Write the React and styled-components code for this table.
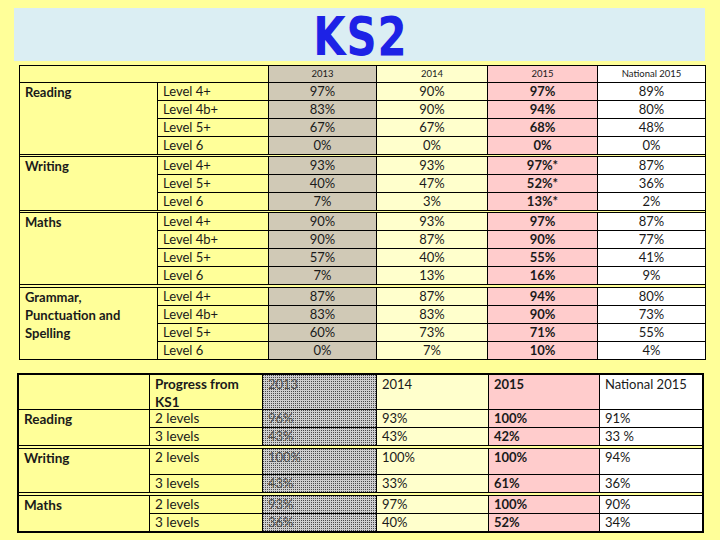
import React from "react";
import styled, { createGlobalStyle, css } from "styled-components";

const Global = createGlobalStyle`
  html, body { margin: 0; padding: 0; background: #ffff99; }
  body { font-family: Lato, "Open Sans", sans-serif; color: #1a1a1a; }
`;

const Page = styled.div`
  width: 720px;
  height: 540px;
  overflow: hidden;
  background: #ffff99;
  display: flex;
  flex-direction: column;
  align-items: flex-start;
  padding-top: 8px;
  box-sizing: border-box;
`;

const Banner = styled.div`
  margin-left: 14px;
  width: 691px;
  height: 53px;
  background: #dbeef3;
  display: flex;
  justify-content: center;
  align-items: center;
`;

const Title = styled.h1`
  margin: 0;
  font-family: "DejaVu Sans", sans-serif;
  font-weight: bold;
  font-size: 53px;
  line-height: 53px;
  color: #1d22e6;
  transform: scaleX(0.79) translate(1px, 2px);
  letter-spacing: 1px;
`;

const Frame = styled.div`
  margin-left: ${(p) => p.$left}px;
  margin-top: ${(p) => p.$top}px;
  border: ${(p) => p.$border}px solid #000;
  background: #ffff99;
  display: flex;
  flex-direction: column;
`;

const Grid = styled.div`
  display: grid;
  grid-template-columns: ${(p) => p.$cols};
  grid-template-rows: ${(p) => p.$rows};
  gap: 1px;
  background: #000;
  background-clip: padding-box;
  ${(p) =>
    p.$divider === "single" &&
    css`
      border-top: 1px solid #000;
    `}
  ${(p) =>
    p.$divider === "double" &&
    css`
      border-top: ${p.$dw}px double #000;
    `}
`;

const tones = {
  base: "#ffff99",
  beige: "#d0c9b6",
  cream: "#ffffcc",
  pink: "#ffcccc",
  white: "#ffffff",
  dots: "#cfcfcf",
};

const Cell = styled.div`
  background: ${(p) => tones[p.$tone || "base"]};
  ${(p) =>
    p.$tone === "dots" &&
    css`
      background-image: conic-gradient(from 180deg at 1px 1px, #cfcfcf 25%, #4a4a4a 0 50%, #cfcfcf 0);
      background-size: 2px 2px;
      color: #505050;
    `}
  ${(p) => p.$span && css`grid-column: span ${p.$span};`}
  padding: 0 5px;
  text-align: ${(p) => p.$align || "left"};
  font-size: ${(p) => p.$size || 13}px;
  line-height: ${(p) => p.$lh || 17}px;
  font-weight: ${(p) => (p.$bold ? 700 : 400)};
  white-space: ${(p) => (p.$wrap ? "normal" : "nowrap")};
  overflow: hidden;
`;

const Label = styled(Cell)`
  grid-row: span ${(p) => p.$rowsSpan};
  font-weight: 700;
  line-height: 18px;
  white-space: normal;
`;

const topSections = [
  {
    name: "Reading",
    rows: [
      ["Level 4+", "97%", "90%", "97%", "89%"],
      ["Level 4b+", "83%", "90%", "94%", "80%"],
      ["Level 5+", "67%", "67%", "68%", "48%"],
      ["Level 6", "0%", "0%", "0%", "0%"],
    ],
  },
  {
    name: "Writing",
    rows: [
      ["Level 4+", "93%", "93%", "97%*", "87%"],
      ["Level 5+", "40%", "47%", "52%*", "36%"],
      ["Level 6", "7%", "3%", "13%*", "2%"],
    ],
  },
  {
    name: "Maths",
    rows: [
      ["Level 4+", "90%", "93%", "97%", "87%"],
      ["Level 4b+", "90%", "87%", "90%", "77%"],
      ["Level 5+", "57%", "40%", "55%", "41%"],
      ["Level 6", "7%", "13%", "16%", "9%"],
    ],
  },
  {
    name: "Grammar, Punctuation and Spelling",
    rows: [
      ["Level 4+", "87%", "87%", "94%", "80%"],
      ["Level 4b+", "83%", "83%", "90%", "73%"],
      ["Level 5+", "60%", "73%", "71%", "55%"],
      ["Level 6", "0%", "7%", "10%", "4%"],
    ],
  },
];

const bottomSections = [
  {
    name: "Reading",
    heights: [17, 17],
    rows: [
      ["2 levels", "96%", "93%", "100%", "91%"],
      ["3 levels", "43%", "43%", "42%", "33 %"],
    ],
  },
  {
    name: "Writing",
    heights: [25, 17],
    rows: [
      ["2 levels", "100%", "100%", "100%", "94%"],
      ["3 levels", "43%", "33%", "61%", "36%"],
    ],
  },
  {
    name: "Maths",
    heights: [17, 17],
    rows: [
      ["2 levels", "93%", "97%", "100%", "90%"],
      ["3 levels", "36%", "40%", "52%", "34%"],
    ],
  },
];

const years = ["2013", "2014", "2015", "National 2015"];
const topTones = ["beige", "cream", "pink", "white"];
const bottomTones = ["dots", "cream", "pink", "white"];

const TOP_COLS = "137px 110px 107px 110px 109px 107px";
const BOTTOM_COLS = "130px 112px 113px 111px 110px 102px";

function TopTable() {
  return (
    <Frame $left={19} $top={4} $border={1}>
      <Grid $cols={TOP_COLS} $rows="16px">
        <Cell $span={2} />
        {years.map((y, i) => (
          <Cell key={y} $tone={topTones[i]} $align="center" $size={9.5} $lh={16}>
            {y}
          </Cell>
        ))}
      </Grid>
      {topSections.map((sec, si) => (
        <Grid
          key={sec.name}
          $cols={TOP_COLS}
          $rows={`repeat(${sec.rows.length}, 17px)`}
          $divider={si === 0 ? "single" : "double"}
          $dw={si === 3 ? 4 : 3}
        >
          <Label $rowsSpan={sec.rows.length}>{sec.name}</Label>
          {sec.rows.map((r) => (
            <React.Fragment key={r[0]}>
              <Cell>{r[0]}</Cell>
              {r.slice(1).map((v, vi) => (
                <Cell key={vi} $tone={topTones[vi]} $align="center" $bold={vi === 2}>
                  {v}
                </Cell>
              ))}
            </React.Fragment>
          ))}
        </Grid>
      ))}
    </Frame>
  );
}

function BottomTable() {
  return (
    <Frame $left={17} $top={13} $border={2}>
      <Grid $cols={BOTTOM_COLS} $rows="34px">
        <Cell />
        <Cell $bold $wrap $lh={18} $size={13.5}>
          Progress from KS1
        </Cell>
        {years.map((y, i) => (
          <Cell key={y} $tone={bottomTones[i]} $size={13} $lh={18} $bold={i === 2}>
            {y}
          </Cell>
        ))}
      </Grid>
      {bottomSections.map((sec, si) => (
        <Grid
          key={sec.name}
          $cols={BOTTOM_COLS}
          $rows={sec.heights.map((h) => `${h}px`).join(" ")}
          $divider={si === 0 ? "single" : "double"}
          $dw={4}
        >
          <Label $rowsSpan={sec.rows.length} $size={13.5}>
            {sec.name}
          </Label>
          {sec.rows.map((r) => (
            <React.Fragment key={r[0]}>
              <Cell $size={13.5}>{r[0]}</Cell>
              {r.slice(1).map((v, vi) => (
                <Cell key={vi} $tone={bottomTones[vi]} $size={13} $bold={vi === 2}>
                  {v}
                </Cell>
              ))}
            </React.Fragment>
          ))}
        </Grid>
      ))}
    </Frame>
  );
}

export default function App() {
  return (
    <>
      <Global />
      <Page>
        <Banner>
          <Title>KS2</Title>
        </Banner>
        <TopTable />
        <BottomTable />
      </Page>
    </>
  );
}
